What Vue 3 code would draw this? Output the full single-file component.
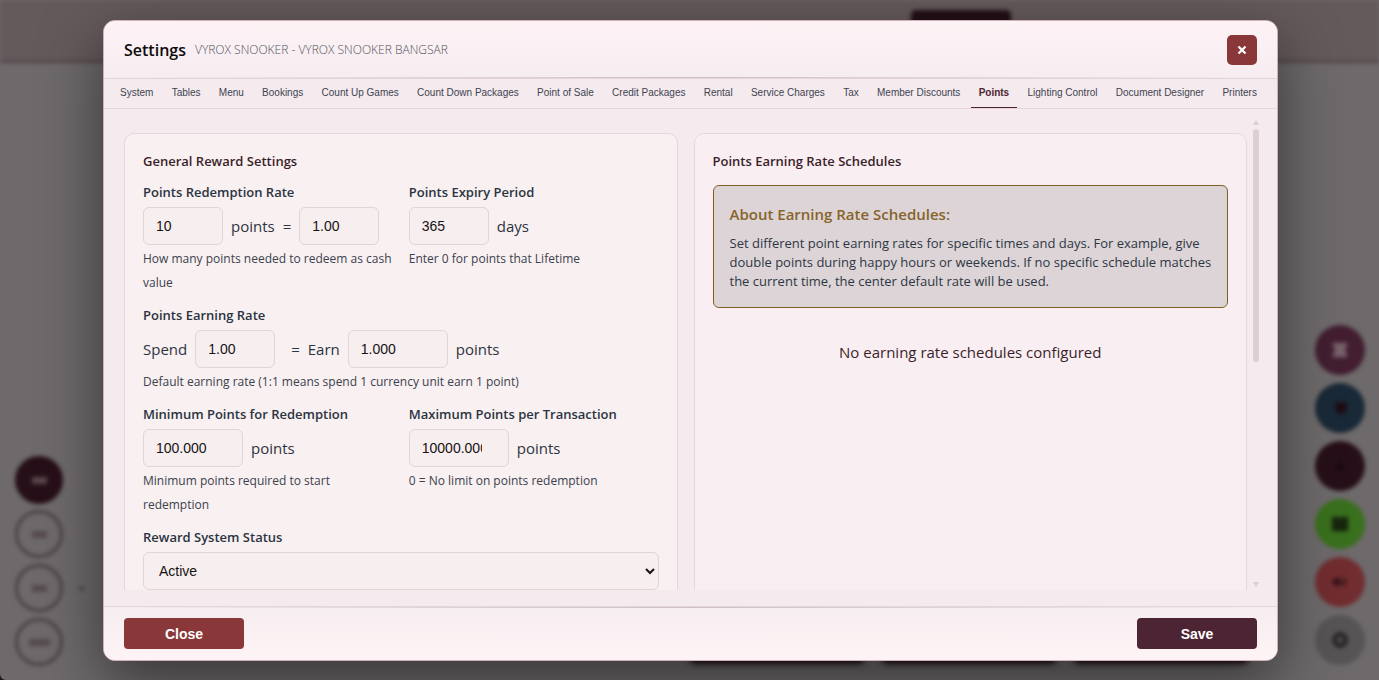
<script setup>
import { ref } from 'vue'

const tabs = ['System', 'Tables', 'Menu', 'Bookings', 'Count Up Games', 'Count Down Packages', 'Point of Sale', 'Credit Packages', 'Rental', 'Service Charges', 'Tax', 'Member Discounts', 'Points', 'Lighting Control', 'Document Designer', 'Printers']
const active = ref('Points')
const redeemPoints = ref('10')
const redeemValue = ref('1.00')
const expiry = ref('365')
const spend = ref('1.00')
const earn = ref('1.000')
const minPoints = ref('100.000')
const maxPoints = ref('10000.000')
const status = ref('Active')
</script>

<template>
  <div class="page">
    <div class="backdrop" aria-hidden="true">
      <div class="topbar"><span class="top-chip"></span></div>
      <div class="bottom-chips"><span></span><span></span><span></span></div>
      <div class="filters">
        <span class="filter on"><i></i></span>
        <span class="filter"><i></i></span>
        <span class="filter"><i></i></span>
        <span class="filter"><i class="wide"></i></span>
      </div>
      <span class="speck"></span>
      <div class="fabs">
        <span class="fab plum"><svg viewBox="0 0 20 20"><path d="M2 2h16v4l-3 4 3 4v4H2v-4l3-4-3-4z" fill="#77616a" /></svg></span>
        <span class="fab navy"><svg viewBox="0 0 20 20"><path d="M3 4h15l-2 9 1 3H6L5 7z" fill="#1c0c14" /></svg></span>
        <span class="fab wine"><svg viewBox="0 0 20 20"><path d="M5 14l4-10 2 2 3 9z" fill="#170a0f" /></svg></span>
        <span class="fab green"><svg viewBox="0 0 20 20"><path d="M1 2h8v2h2V2h8v16H1z" fill="#17250e" /></svg></span>
        <span class="fab red"><svg viewBox="0 0 20 20"><path d="M2 7h4l4-3v12l-4-3H2zM13 6h3v8h-3z" fill="#2d1014" /></svg></span>
        <span class="fab gray"><svg viewBox="0 0 20 20"><circle cx="10" cy="10" r="6" fill="none" stroke="#272021" stroke-width="5" /></svg></span>
      </div>
    </div>

    <section class="modal" role="dialog" aria-labelledby="dialog-title">
      <header class="head">
        <h1 id="dialog-title">Settings</h1>
        <span class="sub">VYROX SNOOKER - VYROX SNOOKER BANGSAR</span>
        <button class="x" type="button" aria-label="Close dialog">
          <svg viewBox="0 0 10 10" width="10" height="10"><path d="M1.5 1.5l7 7M8.5 1.5l-7 7" stroke="#fff" stroke-width="2.2" /></svg>
        </button>
      </header>

      <nav class="tabs">
        <button v-for="t in tabs" :key="t" type="button" :class="['tab', { active: t === active }]" @click="active = t">{{ t }}</button>
      </nav>

      <div class="body">
        <div class="scroll">
          <section class="card general">
            <h2>General Reward Settings</h2>
            <div class="grid">
              <div class="group">
                <label for="redeem-points">Points Redemption Rate</label>
                <div class="row">
                  <input id="redeem-points" v-model="redeemPoints" type="text" />
                  <span>points</span>
                  <span>=</span>
                  <input v-model="redeemValue" type="text" aria-label="Redemption value" />
                </div>
                <p class="hint">How many points needed to redeem as cash value</p>
              </div>
              <div class="group">
                <label for="expiry">Points Expiry Period</label>
                <div class="row"><input id="expiry" v-model="expiry" type="text" /><span>days</span></div>
                <p class="hint">Enter 0 for points that Lifetime</p>
              </div>
              <div class="group full">
                <label for="spend">Points Earning Rate</label>
                <div class="row">
                  <span>Spend</span>
                  <input id="spend" v-model="spend" type="text" />
                  <span class="equals">=</span>
                  <span>Earn</span>
                  <input v-model="earn" class="wide" type="text" aria-label="Points earned" />
                  <span>points</span>
                </div>
                <p class="hint">Default earning rate (1:1 means spend 1 currency unit earn 1 point)</p>
              </div>
              <div class="group">
                <label for="min-points">Minimum Points for Redemption</label>
                <div class="row"><input id="min-points" v-model="minPoints" class="wide" type="text" /><span>points</span></div>
                <p class="hint narrow">Minimum points required to start redemption</p>
              </div>
              <div class="group">
                <label for="max-points">Maximum Points per Transaction</label>
                <div class="row"><input id="max-points" v-model="maxPoints" class="wide spin" type="text" /><span>points</span></div>
                <p class="hint">0 = No limit on points redemption</p>
              </div>
              <div class="group full">
                <label for="status">Reward System Status</label>
                <select id="status" v-model="status"><option>Active</option><option>Inactive</option></select>
              </div>
            </div>
          </section>

          <section class="card schedules">
            <h2>Points Earning Rate Schedules</h2>
            <div class="info">
              <h3>About Earning Rate Schedules:</h3>
              <p>Set different point earning rates for specific times and days. For example, give double points during happy hours or weekends. If no specific schedule matches the current time, the center default rate will be used.</p>
            </div>
            <p class="empty">No earning rate schedules configured</p>
          </section>
        </div>
        <div class="bar" aria-hidden="true">
          <i class="up"></i>
          <div class="track"><div class="thumb"></div></div>
          <i class="down"></i>
        </div>
      </div>

      <footer class="foot">
        <button class="close" type="button">Close</button>
        <button class="save" type="button">Save</button>
      </footer>
    </section>
  </div>
</template>

<style>
body { margin: 0; background: #1b1718; }
</style>

<style scoped>
* { box-sizing: border-box; }
h1, h2, h3, p { margin: 0; }
button, input, select { font-family: "Liberation Sans", Arial, sans-serif; }
.page {
  position: relative;
  height: 100vh;
  padding: 20px 101px 19px 103px;
  overflow: hidden;
  font-family: "Open Sans", "Noto Sans", sans-serif;
  color: #2d3441;
}
.backdrop {
  position: absolute;
  inset: 0;
  overflow: hidden;
  background: #6e6a6b;
  border-bottom-left-radius: 6px;
}
.topbar {
  height: 63px;
  background: #655a5b;
  border-bottom: 3px solid #54474b;
  filter: blur(2px);
}
.top-chip {
  position: absolute;
  left: 911px;
  top: 10px;
  width: 100px;
  height: 40px;
  border-radius: 5px;
  background: #220f16;
}
.bottom-chips {
  position: absolute;
  left: 690px;
  right: 131px;
  bottom: 16px;
  display: flex;
  gap: 18px;
  filter: blur(3px);
}
.bottom-chips span { flex: 1; height: 30px; background: #1c0b12; border-radius: 5px; }
.filters {
  position: absolute;
  left: 15px;
  bottom: 14px;
  display: flex;
  flex-direction: column;
  gap: 6px;
  filter: blur(2px);
}
.filter {
  width: 48px;
  height: 48px;
  border: 3px solid #4a4043;
  border-radius: 50%;
  display: grid;
  place-items: center;
}
.filter.on { background: #260f18; border-color: #260f18; }
.filter i { width: 15px; height: 7px; background: #554b4e; }
.filter.on i { background: #5a474e; }
.filter i.wide { width: 21px; }
.speck { position: absolute; left: 79px; bottom: 89px; width: 5px; height: 5px; background: #544c4f; filter: blur(2px); }
.fabs {
  position: absolute;
  right: 14px;
  bottom: 15px;
  display: flex;
  flex-direction: column;
  gap: 8px;
  filter: blur(2px);
}
.fab { width: 50px; height: 50px; border-radius: 50%; display: grid; place-items: center; }
.fab svg { width: 18px; height: 18px; }
.plum { background: #421e30; }
.navy { background: #192937; }
.wine { background: #260f18; }
.green { background: #39701d; }
.red { background: #712d30; }
.gray { background: #565455; }

.modal {
  position: relative;
  height: 100%;
  display: flex;
  flex-direction: column;
  border: 1px solid #cdb0b9;
  border-radius: 12px;
  overflow: hidden;
  background: #f5eaee;
  box-shadow: 0 20px 60px rgba(0, 0, 0, 0.5);
}
.head {
  position: relative;
  flex: none;
  height: 58px;
  padding: 0 20px;
  display: flex;
  align-items: center;
  gap: 9px;
  background: linear-gradient(#fef2f5, #f6edf0);
  border-bottom: 1px solid #e2d5da;
}
.head::after, .foot::before {
  content: "";
  position: absolute;
  left: 0;
  right: 0;
  height: 1px;
  background: linear-gradient(90deg, transparent, #cfbfc5, transparent);
}
.head::after { bottom: 0; }
.foot::before { top: 0; }
h1 { font-size: 16px; line-height: 24px; font-weight: 600; color: #0d0a0b; }
.sub { font-size: 12px; line-height: 18px; font-weight: 300; color: #50535e; }
.x {
  margin-left: auto;
  width: 30px;
  height: 30px;
  padding: 0;
  display: grid;
  place-items: center;
  border: 0;
  border-radius: 5px;
  background: #893739;
}
.tabs {
  flex: none;
  height: 30px;
  padding: 0 12px 0 8px;
  display: flex;
  justify-content: space-between;
  border-bottom: 1px solid #e4d8dc;
}
.tab {
  padding: 0 8px;
  border: 0;
  border-bottom: 1px solid transparent;
  background: none;
  font-size: 10px;
  line-height: 14px;
  color: #3d4450;
  white-space: nowrap;
}
.tab.active { font-weight: 700; color: #4d2433; border-bottom-color: #4d2433; }
.body {
  flex: 1;
  min-height: 0;
  margin: 8px 18px 16px 20px;
  display: flex;
  gap: 6px;
}
.scroll {
  flex: 1;
  min-width: 0;
  padding-top: 16px;
  overflow: hidden;
  display: grid;
  grid-template-columns: 1fr 1fr;
  gap: 16px;
}
.card { min-height: 800px; padding: 18px; border: 1px solid #e4d6da; border-radius: 10px; background: #f9f0f1; }
.schedules { background: #f9eef2; border-color: #e6d8d5; }
h2 { font-size: 13px; line-height: 18px; margin-bottom: 10px; font-weight: 600; color: #3a1f2a; }
.grid { display: grid; grid-template-columns: 1fr 1fr; gap: 8px 16px; }
.full { grid-column: 1 / -1; }
label { display: block; margin-bottom: 3px; font-size: 13px; line-height: 24px; font-weight: 600; color: #2b3441; }
.row { display: flex; align-items: center; gap: 8px; height: 38px; font-size: 15px; white-space: nowrap; }
.equals { margin-left: 8px; }
input, select {
  height: 38px;
  border: 1px solid #e0d5d7;
  border-radius: 6px;
  background: #f7eeef;
  font-size: 14px;
  color: #151314;
}
input { width: 80px; padding: 0 12px; }
input.wide { width: 100px; }
input.spin { padding-right: 26px; }
select { display: block; width: 100%; padding: 0 0 0 11px; }
.hint { margin-top: 2px; font-size: 12px; line-height: 24px; color: #3a424e; }
.hint.narrow { max-width: 220px; }
.info { margin-top: 15px; padding: 16px 10px 16px 16px; border: 1px solid #7f5f22; border-radius: 6px; background: #ddd4d7; }
h3 { margin-bottom: 8px; font-size: 15px; line-height: 24px; font-weight: 600; color: #86642a; }
.info p { font-size: 13px; line-height: 19px; color: #2d3744; }
.empty { margin-top: 32px; text-align: center; font-size: 15px; line-height: 24px; color: #3a1f2a; }
.bar { flex: none; width: 6px; padding: 3px 0; display: flex; flex-direction: column; gap: 4px; }
.track { flex: 1; }
.thumb { height: 52%; border-radius: 3px; background: #ddced3; }
.up, .down { border: 3px solid transparent; }
.up { border-top: 0; border-bottom: 5px solid #ddced3; }
.down { border-bottom: 0; border-top: 5px solid #ddced3; }
.foot {
  position: relative;
  flex: none;
  height: 54px;
  padding: 0 20px;
  display: flex;
  align-items: center;
  justify-content: space-between;
  border-top: 1px solid #e4d7db;
  background: linear-gradient(#f6edf0, #fef3f5);
}
.foot button { width: 120px; height: 31px; border: 0; border-radius: 4px; color: #fff; font-size: 14px; font-weight: 700; }
.close { background: #893739; }
.save { background: #4d2433; }
</style>
